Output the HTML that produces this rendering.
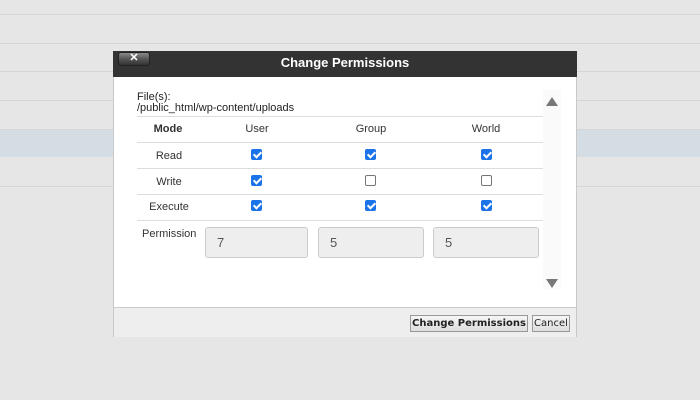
<html><head><style>
body{margin:0;width:700px;height:400px;background:#e6e6e6;position:relative;overflow:hidden;font-family:"Liberation Sans",Arial,sans-serif;}
.l{position:absolute;left:0;width:700px;height:1px;background:#d6d6d6}
.a{position:absolute}
.cb{position:absolute;width:11px;height:11px;border-radius:2px;background:#1a73e8;}
.cb::after{content:"";position:absolute;left:3.5px;top:1px;width:3px;height:6px;border:solid #fff;border-width:0 2px 2px 0;transform:rotate(45deg)}
.ub{position:absolute;width:9px;height:9px;border:1px solid #767676;border-radius:2px;background:#fff}
.t{position:absolute;font-size:11px;color:#333;transform:translateX(-50%)}
.sep{position:absolute;left:137px;width:406px;height:1px;background:#ddd}
.in{position:absolute;top:227px;height:31px;border:1px solid #ccc;border-radius:3px;background:#eee;font-size:13px;color:#555;line-height:29px;box-sizing:border-box;padding-left:11px}
.btn{position:absolute;top:315px;height:17px;border:1px solid #999;background:linear-gradient(#f6f6f6,#ddd);font-family:"DejaVu Sans",sans-serif;font-size:10px;line-height:16px;text-align:center;box-sizing:border-box;color:#222}
</style></head><body>
<div class="l" style="top:14px"></div><div class="l" style="top:43px"></div><div class="l" style="top:71px"></div><div class="l" style="top:100px"></div><div class="l" style="top:129px"></div>
<div class="a" style="left:0;top:130px;width:700px;height:27px;background:#d3dde3"></div>
<div class="l" style="top:186px"></div>
<div class="a" style="left:113px;top:51px;width:464px;height:286px;background:#fff;border:1px solid #c8c8c8;box-sizing:border-box"></div>
<div class="a" style="left:113px;top:51px;width:464px;height:26px;background:#333"></div>
<div class="a" style="left:118px;top:52px;width:32px;height:14px;border-radius:3px;background:linear-gradient(#8a8a8a,#555 50%,#333);border:1px solid #222;box-sizing:border-box;color:#fff;font-size:11px;font-weight:bold;text-align:center;line-height:11px">✕</div>
<div class="a" style="left:113px;width:464px;top:55px;text-align:center;color:#fff;font-weight:bold;font-size:13px">Change Permissions</div>
<div class="a" style="left:137px;top:92px;font-size:11px;color:#222;line-height:11px">File(s):<br>/public_html/wp-content/uploads</div>
<div class="sep" style="top:116px"></div><div class="sep" style="top:142px"></div><div class="sep" style="top:168px"></div><div class="sep" style="top:194px"></div><div class="sep" style="top:220px"></div>
<div class="t" style="left:168px;top:123px;font-weight:bold">Mode</div>
<div class="t" style="left:257px;top:123px">User</div><div class="t" style="left:371px;top:123px">Group</div><div class="t" style="left:486px;top:123px">World</div>
<div class="t" style="left:169px;top:150px">Read</div><div class="t" style="left:169px;top:176px">Write</div><div class="t" style="left:169px;top:201px">Execute</div>
<div class="cb" style="left:251px;top:149px"></div><div class="cb" style="left:365px;top:149px"></div><div class="cb" style="left:481px;top:149px"></div>
<div class="cb" style="left:251px;top:175px"></div><div class="ub" style="left:365px;top:175px"></div><div class="ub" style="left:481px;top:175px"></div>
<div class="cb" style="left:251px;top:200px"></div><div class="cb" style="left:365px;top:200px"></div><div class="cb" style="left:481px;top:200px"></div>
<div class="a" style="left:142px;top:228px;font-size:11px;color:#333">Permission</div>
<div class="in" style="left:205px;width:103px">7</div><div class="in" style="left:318px;width:106px">5</div><div class="in" style="left:433px;width:106px">5</div>
<div class="a" style="left:543px;top:90px;width:18px;height:200px;background:#fafafa"></div>
<div class="a" style="left:546px;top:97px;width:0;height:0;border-left:6px solid transparent;border-right:6px solid transparent;border-bottom:9px solid #777"></div>
<div class="a" style="left:546px;top:279px;width:0;height:0;border-left:6px solid transparent;border-right:6px solid transparent;border-top:9px solid #777"></div>
<div class="a" style="left:114px;top:307px;width:462px;height:29px;background:#eee;border-top:1px solid #ccc"></div>
<div class="btn" style="left:410px;width:118px;font-weight:bold">Change Permissions</div>
<div class="btn" style="left:532px;width:38px">Cancel</div>
</body></html>
